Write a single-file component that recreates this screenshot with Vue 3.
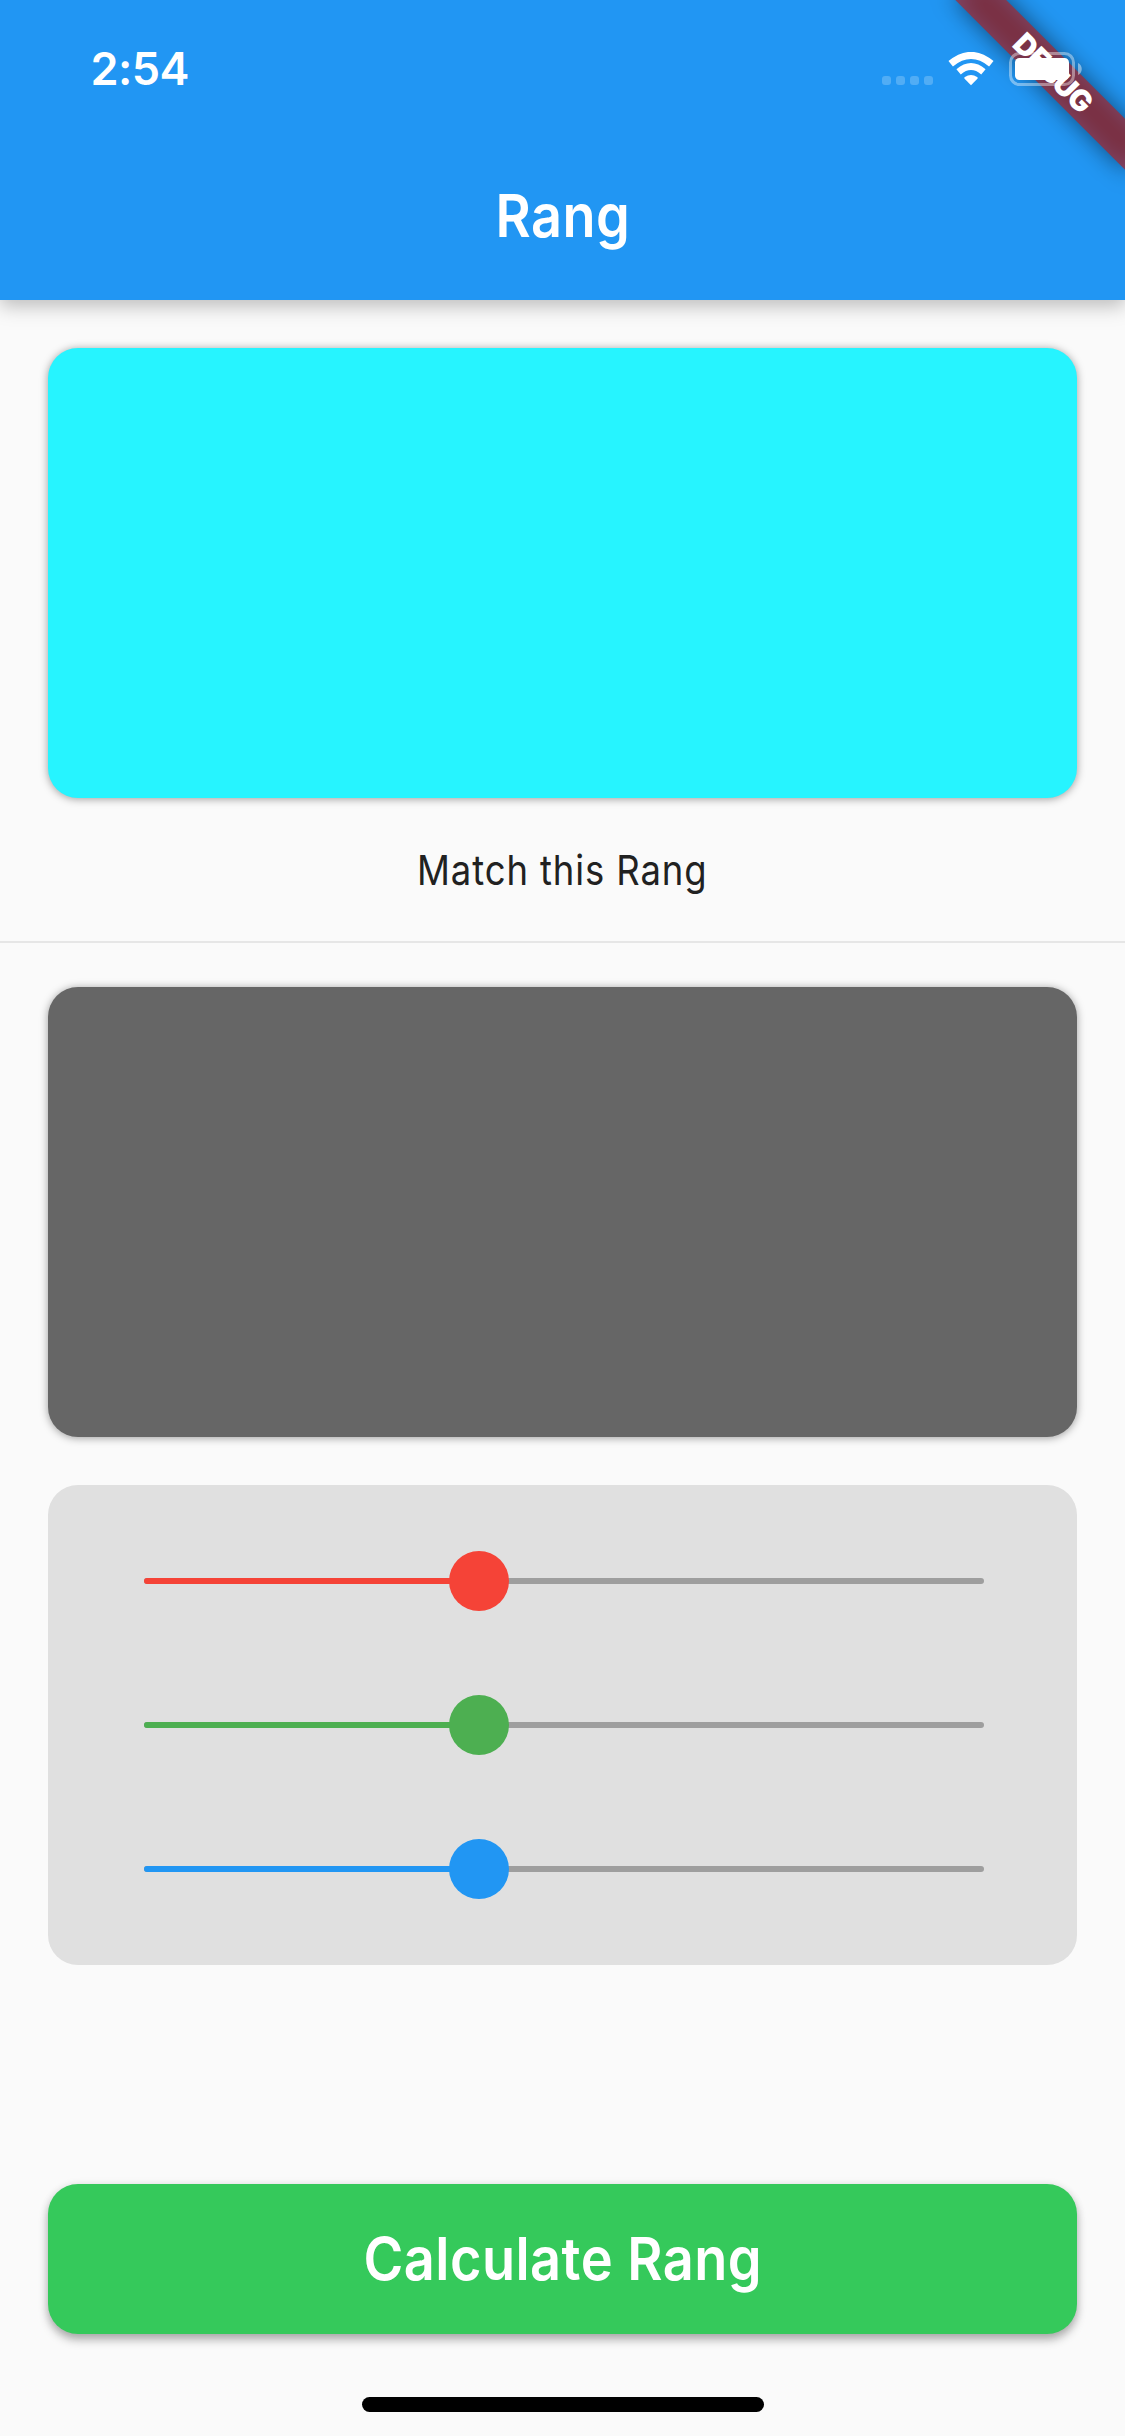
<script setup>
const sliders = [
  { name: 'red', color: '#f54337', value: 39.85 },
  { name: 'green', color: '#4daf51', value: 39.85 },
  { name: 'blue', color: '#2196f3', value: 39.85 }
]
</script>

<template>
  <main class="screen">
    <header class="app-bar">
      <div class="status">
        <span class="time">2:54</span>
        <div class="status-icons">
          <div class="cell"><i v-for="n in 4" :key="n" /></div>
          <svg class="wifi" width="46" height="34" viewBox="0 0 46 34">
            <path d="M23 33.2L16.6 26.8Q15.7 25.8 16.9 25Q23 21.2 29.1 25Q30.3 25.8 29.4 26.8Z" fill="#fff" />
            <path d="M10.6 19.8Q23 9.4 35.4 19.8" fill="none" stroke="#fff" stroke-width="6.8" />
            <path d="M2.7 11.8Q23-4.9 43.3 11.8" fill="none" stroke="#fff" stroke-width="7" />
          </svg>
          <svg class="battery" width="74" height="34" viewBox="0 0 74 34">
            <rect x="1.5" y="1.5" width="63" height="31" rx="9" fill="none" stroke="#fff" stroke-opacity=".4" stroke-width="3" />
            <rect x="6" y="6" width="54" height="22" rx="4.5" fill="#fff" />
            <path d="M69 11C74 13 74 21 69 23Z" fill="#fff" fill-opacity=".45" />
          </svg>
        </div>
      </div>
      <h1 class="title">
        <svg width="200" height="84"><text x="32.5" y="57.3" textLength="134.8" lengthAdjust="spacingAndGlyphs">Rang</text></svg>
      </h1>
      <div class="banner">
        <div class="banner-shadow" />
        <div class="banner-strip">DEBUG</div>
      </div>
    </header>

    <section class="target">
      <div class="swatch cyan" />
      <p class="caption">
        <svg width="480" height="84"><text x="94" y="45" textLength="290.5" lengthAdjust="spacingAndGlyphs">Match this Rang</text></svg>
      </p>
    </section>
    <hr class="divider">
    <div class="swatch gray" />

    <section class="panel">
      <div v-for="s in sliders" :key="s.name" class="slider">
        <div class="track">
          <div class="active" :style="{ width: s.value + '%', background: s.color }">
            <b class="thumb" :style="{ background: s.color }" />
          </div>
        </div>
      </div>
    </section>

    <button class="calculate">
      <svg width="640" height="150"><text x="120.5" y="96" textLength="398.5" lengthAdjust="spacingAndGlyphs">Calculate Rang</text></svg>
    </button>
    <div class="home" />
  </main>
</template>

<style>
body { margin: 0; background: #fafafa; }
</style>

<style scoped>
.screen {
  width: 1125px;
  height: 2436px;
  display: flex;
  flex-direction: column;
  overflow: hidden;
  position: relative;
  background: #fafafa;
  font-family: Inter, Roboto, "Liberation Sans", sans-serif;
}
svg { display: block; flex: none; }
.app-bar {
  flex: none;
  height: 300px;
  background: #2196f3;
  color: #fff;
  box-shadow: 0 6px 18px rgba(0, 0, 0, .25);
}
.status {
  position: relative;
  z-index: 2;
  height: 132px;
  box-sizing: border-box;
  padding: 0 42px 0 90.5px;
  display: flex;
  justify-content: space-between;
}
.time {
  font-size: 45px;
  font-weight: 600;
  line-height: 56px;
  padding-top: 41px;
  letter-spacing: -.6px;
}
.status-icons { display: flex; align-items: flex-start; padding-top: 52px; }
.cell { display: flex; gap: 5px; padding-top: 24px; margin-right: 15px; }
.cell i { width: 9px; height: 9px; border-radius: 3px; background: rgba(255, 255, 255, .22); }
.wifi { margin-right: 15px; }
.title {
  margin: 0;
  height: 168px;
  display: flex;
  justify-content: center;
  align-items: flex-start;
  padding-top: 48px;
  box-sizing: border-box;
}
.title text, .calculate text { font-size: 59px; font-weight: 600; fill: #fff; letter-spacing: .5px; }
.banner {
  position: absolute;
  top: 0;
  left: 1125px;
  width: 0;
  height: 0;
  z-index: 1;
  transform: rotate(45deg);
}
.banner-shadow, .banner-strip {
  position: absolute;
  left: -120px;
  top: 84px;
  width: 240px;
  height: 36px;
}
.banner-shadow { background: rgba(0, 0, 0, .5); filter: blur(12px); }
.banner-strip {
  background: rgba(183, 28, 28, .627);
  font-size: 29.5px;
  line-height: 36px;
  font-weight: 900;
  text-align: center;
  text-indent: 1px;
  letter-spacing: -1px;
}
.target { flex: none; padding-top: 48px; }
.swatch {
  flex: none;
  height: 450px;
  margin: 0 48px;
  border-radius: 30px;
  box-shadow: 0 1px 8px rgba(0, 0, 0, .38);
}
.cyan { background: #26f4ff; }
.gray { background: #666; }
.caption { margin: 0; height: 143px; padding-top: 42px; box-sizing: border-box; display: flex; justify-content: center; }
.caption text { font-size: 41.5px; font-weight: 400; fill: #212121; letter-spacing: 1px; }
.divider { width: 100%; height: 2px; flex: none; border: 0; margin: 0 0 44px; background: #e6e6e6; }
.panel {
  flex: none;
  height: 480px;
  margin: 48px 48px 0;
  padding: 24px 93px 24px 96px;
  box-sizing: border-box;
  border-radius: 30px;
  background: #e0e0e0;
}
.slider { height: 144px; display: flex; align-items: center; }
.track { width: 100%; height: 6px; border-radius: 3px; background: #9e9e9e; }
.active { height: 6px; border-radius: 3px 0 0 3px; display: flex; align-items: center; justify-content: flex-end; }
.thumb { flex: none; width: 60px; height: 60px; border-radius: 50%; margin-right: -30px; }
.calculate {
  flex: none;
  height: 150px;
  margin: 219px 48px 0;
  padding: 0;
  border: 0;
  border-radius: 30px;
  background: #35c95b;
  font-family: inherit;
  display: flex;
  justify-content: center;
  box-shadow: 0 6px 10px rgba(0, 0, 0, .28), 0 1px 8px rgba(0, 0, 0, .1);
}
.home { flex: none; width: 402px; height: 15px; margin: 63px auto 0; border-radius: 8px; background: #000; }
</style>
